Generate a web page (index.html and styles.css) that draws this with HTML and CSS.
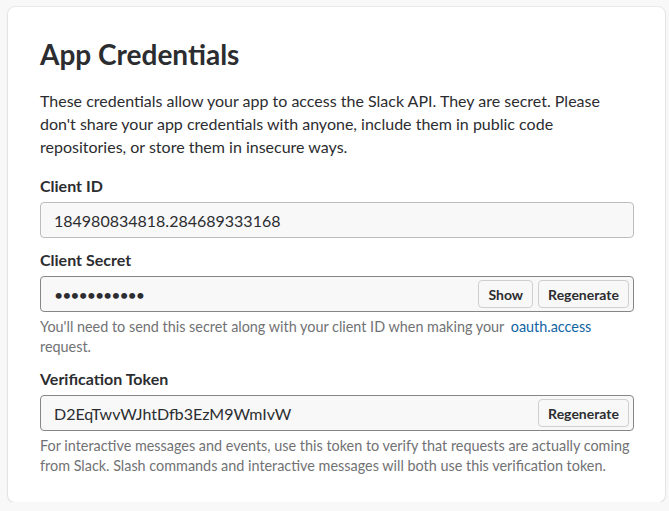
FILE: index.html
```html
<!DOCTYPE html>
<html>
<head>
<meta charset="utf-8">
<link rel="stylesheet" href="styles.css">
</head>
<body>
<div class="card">
  <h1 class="title">App Credentials</h1>
  <p class="intro">These credentials allow your app to access the Slack API. They are secret. Please don't share your app credentials with anyone, include them in public code repositories, or store them in insecure ways.</p>

  <div class="field first">
    <div class="label">Client ID</div>
    <div class="input light"><span class="value">184980834818.284689333168</span></div>
  </div>

  <div class="field">
    <div class="label">Client Secret</div>
    <div class="input dark">
      <span class="value dots">•••••••••••</span>
      <span class="btn">Show</span>
      <span class="btn">Regenerate</span>
    </div>
    <p class="help">You'll need to send this secret along with your client ID when making your <a class="link">oauth.access</a> request.</p>
  </div>

  <div class="field">
    <div class="label">Verification Token</div>
    <div class="input dark">
      <span class="value">D2EqTwvWJhtDfb3EzM9WmIvW</span>
      <span class="btn">Regenerate</span>
    </div>
    <p class="help">For interactive messages and events, use this token to verify that requests are actually coming from Slack. Slash commands and interactive messages will both use this verification token.</p>
  </div>
</div>
</body>
</html>
```
FILE: styles.css
```css
html, body {
  margin: 0;
  padding: 0;
}
body {
  background: #f8f8f8;
  font-family: Lato, "Noto Sans", sans-serif;
  color: #2c2d30;
  padding: 7px 4px 0 8px;
}
.card {
  width: 657px;
  box-sizing: border-box;
  background: #fff;
  border-radius: 7px;
  box-shadow: 0 0 0 1px rgba(0,0,0,0.05), 0 1px 3px rgba(0,0,0,0.08);
  padding: 29px 31px 26px 32px;
}
.title {
  margin: 0;
  font-size: 28px;
  font-weight: 700;
  line-height: 36px;
  color: #2c2d30;
}
.intro {
  margin: 17px 0 0;
  font-size: 16px;
  line-height: 23px;
  color: #2c2d30;
}
.field {
  margin-top: 11px;
}
.field.first {
  margin-top: 17px;
}
.label {
  font-size: 16px;
  font-weight: 700;
  line-height: 22px;
  margin-bottom: 5px;
}
.input {
  height: 36px;
  box-sizing: border-box;
  border-radius: 4px;
  background: #f8f8f8;
  display: flex;
  align-items: center;
  padding: 0 4px 0 13px;
  gap: 5px;
}
.input.light {
  border: 1px solid #bdbdbd;
}
.input.dark {
  border: 1px solid #868686;
}
.value {
  flex: 1;
  font-size: 16px;
  color: #2c2d30;
}
.dots {
  letter-spacing: -1.1px;
}
.btn {
  height: 28px;
  box-sizing: border-box;
  border: 1px solid #cfcfcf;
  border-radius: 4px;
  background: #f8f8f8;
  padding: 0 9px;
  font-size: 14px;
  font-weight: 700;
  display: flex;
  align-items: center;
  color: #2c2d30;
}
.help {
  margin: 5px 0 0;
  font-size: 14.4px;
  line-height: 20px;
  color: #717274;
}
.link {
  color: #1264a3;
  margin-left: 3px;
}
```
